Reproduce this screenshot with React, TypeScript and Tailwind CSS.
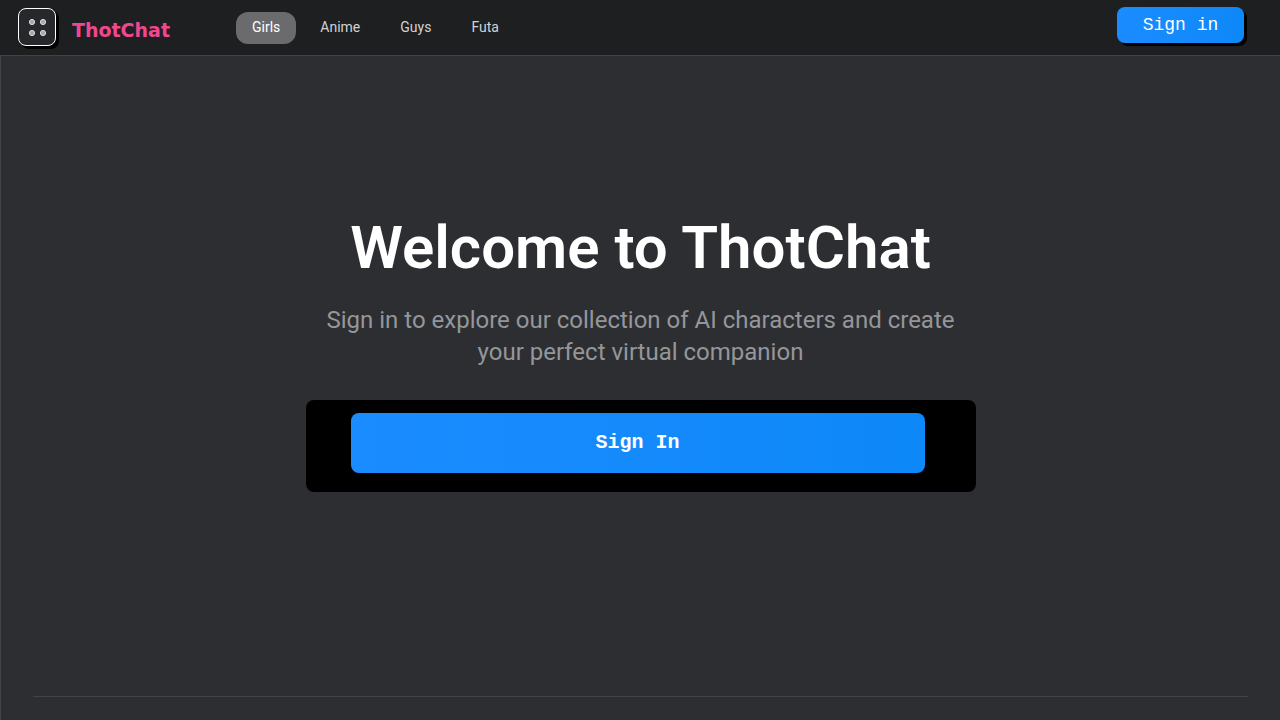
import { useState } from "react";
import clsx from "clsx";

const categories = ["Girls", "Anime", "Guys", "Futa"];

function MenuButton() {
  return (
    <button
      type="button"
      aria-label="Menu"
      className="flex size-[38px] items-center justify-center rounded-lg border border-white bg-[#26282c] shadow-[3px_3px_0_#000]"
    >
      <svg width="20" height="20" viewBox="0 0 20 20" fill="#a8a9ac" stroke="#dcdcde">
        <circle cx="5" cy="5" r="2.6" />
        <circle cx="16" cy="5" r="2.6" />
        <circle cx="5" cy="16" r="2.6" />
        <circle cx="16" cy="16" r="2.6" />
      </svg>
    </button>
  );
}

function Header() {
  const [active, setActive] = useState("Girls");

  return (
    <header className="flex h-14 items-center border-b border-[#424347] bg-[#1e1f21] pr-9 pb-0.5 pl-[18px]">
      <MenuButton />
      <a
        href="#"
        className="ml-4 w-[164px] pt-1.5 font-['DejaVu_Sans'] text-[19px] leading-6 font-bold text-[#f0478f]"
      >
        ThotChat
      </a>
      <nav className="flex gap-2 pt-0.5">
        {categories.map((category) => (
          <button
            key={category}
            type="button"
            onClick={() => setActive(category)}
            className={clsx(
              "h-8 rounded-xl px-4 pb-0.5 text-sm",
              active === category ? "bg-[#6b6b6d] text-white" : "text-[#d2d2d3]"
            )}
          >
            {category}
          </button>
        ))}
      </nav>
      <div className="ml-auto pb-1">
        <button
          type="button"
          className="h-9 w-[127px] rounded-lg bg-linear-to-r from-[#1a8cff] to-[#0d88f8] font-['Liberation_Mono',monospace] text-lg text-white shadow-[3px_3px_0_#000]"
        >
          Sign in
        </button>
      </div>
    </header>
  );
}

export default function App() {
  return (
    <div className="flex min-h-screen flex-col bg-[#2d2e32] font-[Roboto,sans-serif]">
      <Header />
      <main className="flex grow flex-col border-l border-[#424347] px-8">
        <section className="flex grow flex-col items-center justify-center pb-11 text-center">
          <h1 className="text-[60px] leading-[64px] font-semibold text-white">
            Welcome to ThotChat
          </h1>
          <p className="mt-6 max-w-[670px] text-2xl leading-8 text-[#95969a]">
            Sign in to explore our collection of AI characters and create your
            perfect virtual companion
          </p>
          <div className="mt-8 w-full max-w-[670px] rounded-lg bg-black pt-[13px] pr-[51px] pb-[19px] pl-[45px]">
            <button
              type="button"
              className="h-[60px] w-full rounded-lg bg-linear-to-r from-[#1a8cff] to-[#0d88f8] font-['Liberation_Mono',monospace] text-xl font-bold text-white"
            >
              Sign In
            </button>
          </div>
        </section>
        <footer className="h-6 border-t border-[#424347]" />
      </main>
    </div>
  );
}
